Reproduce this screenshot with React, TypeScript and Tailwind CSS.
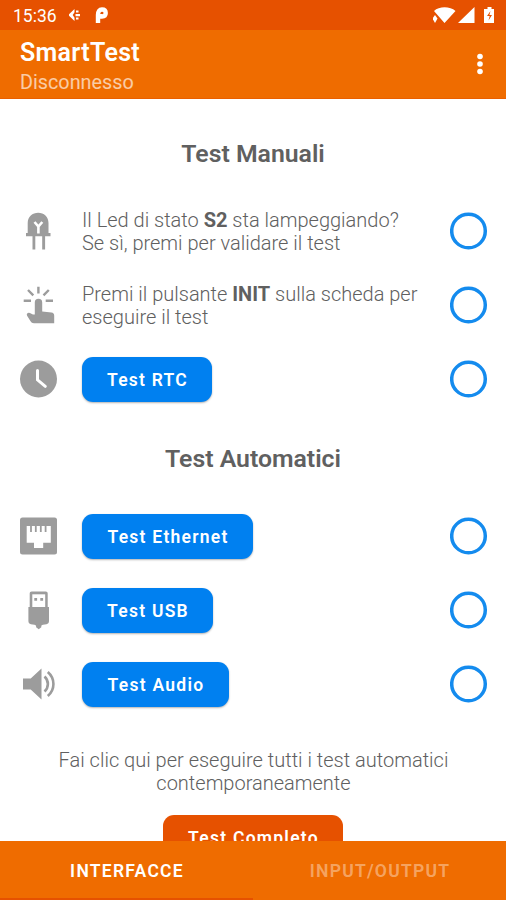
import type { ReactNode } from "react";

const icons = {
  led: (
    <>
      <path fill="currentColor" d="M11.2 24V14C11.2 7.5 16 3.7 21.7 3.7S32 7.5 32 14V24H34V27.2H28.6V40.5H25.7V27.2H18.8V40.5H16V27.2H9.5V24Z" />
      <path fill="none" stroke="white" strokeWidth="2.6" d="M18 13L21.9 17.5L25.8 13M21.9 16.5V24.5" />
    </>
  ),
  touch: (
    <>
      <path
        fill="currentColor"
        d="M18.3 19.5a3.7 3.7 0 0 1 7.4 0V28.6l9.3 1c1.7.2 2.7 1.2 2.7 2.9V40.3H17.5c-1.7 0-2.6-.7-3.6-2.2L10.6 32.700c-.8-1.4.1-2.9 1.8-2.9.8 0 1.4.2 2 .6l2 1.2h1.9Z"
      />
      <path fill="none" stroke="currentColor" strokeWidth="2.4" d="M7.2 17.700h7.3M29.2 17.700h7.3M21.9 3.700v6.700M11.5 7l5.3 5.3M32.3 7L27 12.3" />
    </>
  ),
  clock: (
    <>
      <circle cx="22" cy="22" r="18.5" fill="currentColor" />
      <path fill="none" stroke="white" strokeWidth="3" strokeLinecap="round" d="M21 13.5v9.3l7.8 6.6" />
    </>
  ),
  ethernet: (
    <>
      <rect x="3.5" y="3.5" width="37" height="37" rx="2.5" fill="currentColor" />
      <path fill="white" d="M10.2 12h3.4v6h1.8v-6h3v6h1.8v-6h3.2v6h1.8v-6h3v6h1.8v-6h4.3v16.7h-7.6V34h-9.2v-5.3h-7.3Z" />
    </>
  ),
  usb: (
    <>
      <path fill="currentColor" d="M13.2 5.5c0-1.3.7-2 2-2h14c1.3 0 2 .7 2 2V19h1.3V33c0 2-1 2.8-2.5 3.2l-3.5.6c-1 .2-1.7.7-1.7 1.5v1l-2.6 2-2.6-2v-1c0-.8-.7-1.3-1.7-1.5l-3.5-.6c-1.5-.4-2.5-1.2-2.5-3.2V19h1.3Z" />
      <path fill="white" d="M15.8 6.3h12.9V19H15.8Z" />
      <path fill="currentColor" d="M17.8 10h2.8v2.8h-2.8ZM23.8 10h2.8v2.8h-2.8Z" />
    </>
  ),
  audio: (
    <>
      <path fill="currentColor" d="M6.5 16.5h7.7L25 6.5v31l-10.8-10H6.5Z" />
      <path fill="none" stroke="currentColor" strokeWidth="2.6" d="M28 14.5c4.5 4 4.5 11 0 15M31.3 10c7.5 6.5 7.5 17.5 0 24" />
    </>
  ),
};

type IconName = keyof typeof icons;

function Row({ icon, children }: { icon: IconName; children: ReactNode }) {
  return (
    <div className="flex h-[74px] items-center pl-4 pr-[18px]">
      <svg viewBox="-0.5 0 44 44" className="size-11 shrink-0 text-[#9c9c9c]">
        {icons[icon]}
      </svg>
      <div className="ml-[22px] flex-1">{children}</div>
      <svg viewBox="0 0 38 38" className="size-[38px] shrink-0" fill="none">
        <circle cx="18.5" cy="19" r="16.8" stroke="#148bee" strokeWidth="3.5" />
      </svg>
    </div>
  );
}

function Button({ width, children }: { width: string; children: ReactNode }) {
  return (
    <button
      className={`${width} block h-[45px] rounded-[11px] bg-[#0080f0] pt-0.5 pl-px text-[17.5px] font-semibold tracking-[1.25px] text-white shadow-[0_1px_2px_rgba(0,0,0,0.3)]`}
    >
      {children}
    </button>
  );
}

export default function App() {
  return (
    <div className="flex h-[900px] w-[506px] flex-col overflow-hidden bg-white font-['Roboto',sans-serif] text-[#606060]">
      {/* Status bar */}
      <div className="flex h-[30px] shrink-0 items-center bg-[#e65100] pl-[13px] pr-[11px] text-white">
        <span className="w-[56px] pt-1 text-[17.5px] leading-none">15:36</span>
        <svg viewBox="0 0 12 12" className="size-3 shrink-0" fill="currentColor">
          <path d="M5.5 0v3.2L3.7 6l1.8 2.8V12L0 6.8V5.2ZM7 1.5h2.5v2H7ZM6.500 5h4.5v2.2H6.5ZM7 8.5h2.5v2H7Z" />
        </svg>
        <svg viewBox="0 0 13 16" className="ml-[14px] h-4 w-[13px]" fill="none">
          <path d="M3 16V7.5M3 8C3 4 4.500 2.500 7 2.500s3.700 1.500 3.700 3.500-1.200 3.500-3.700 3.500-2-1-2-2.500" stroke="currentColor" strokeWidth="4.4" />
        </svg>
        <svg viewBox="0 0 62 18" className="ml-auto h-[18px] w-[62px]" fill="currentColor">
          <path d="M1 5C6 0 17 0 22.5 5L11.5 17ZM41.5 1v16H25ZM52 3h2.5V1h4v2H61v14H51V3Z" />
          <path d="M2 9l2.5 3.5L2 17l-2.500-4.500Z" />
          <path d="M57.5 5L54 10h2.7l-1.2 4.5L59 9h-2.6Z" fill="#e65100" />
        </svg>
      </div>

      {/* App bar */}
      <header className="flex h-[69px] shrink-0 items-center justify-between border-b border-[#e65100]/50 bg-[#ef6c00] pl-5 pr-[22px] text-white">
        <div className="pt-[7px]">
          <h1 className="text-[25px] font-semibold leading-[30px] tracking-[0.3px]">SmartTest</h1>
          <p className="text-[19.8px] leading-[29px] text-white/65">Disconnesso</p>
        </div>
        <svg viewBox="0 0 8 22" className="h-[22px] w-2" fill="currentColor">
          <circle cx="4" cy="3.5" r="2.8" />
          <circle cx="4" cy="11" r="2.8" />
          <circle cx="4" cy="18.5" r="2.8" />
        </svg>
      </header>

      <main className="min-h-0 flex-1 overflow-hidden">
        <h2 className="mt-[40px] mb-[25px] text-center text-[24.8px] font-semibold leading-[30px]">Test Manuali</h2>
        <Row icon="led">
          <p className="whitespace-nowrap pt-0.5 text-[20px] font-light leading-[23px]">
            Il Led di stato <b className="font-bold">S2</b> sta lampeggiando?
            <br />
            Se sì, premi per validare il test
          </p>
        </Row>
        <Row icon="touch">
          <p className="whitespace-nowrap pt-0.5 text-[20px] font-light leading-[23px]">
            Premi il pulsante <b className="font-bold">INIT</b> sulla scheda per
            <br />
            eseguire il test
          </p>
        </Row>
        <Row icon="clock">
          <Button width="w-[130px]">Test RTC</Button>
        </Row>

        <h2 className="mt-[28px] mb-[25px] text-center text-[24.8px] font-semibold leading-[30px]">Test Automatici</h2>
        <Row icon="ethernet">
          <Button width="w-[171px]">Test Ethernet</Button>
        </Row>
        <Row icon="usb">
          <Button width="w-[131px]">Test USB</Button>
        </Row>
        <Row icon="audio">
          <Button width="w-[147px]">Test Audio</Button>
        </Row>

        <p className="mt-[28px] pl-px text-center text-[20px] font-light leading-[23px]">
          Fai clic qui per eseguire tutti i test automatici
          <br />
          contemporaneamente
        </p>
        <button className="mx-auto mt-[20px] block h-[45px] w-[180px] rounded-[11px] bg-[#e65100] pt-0.5 pl-px text-[17.5px] font-semibold tracking-[1.25px] text-white">
          Test Completo
        </button>
      </main>

      {/* Tabs */}
      <nav className="grid h-[59px] shrink-0 grid-cols-2 bg-[#ef6c00] text-[17.5px] font-semibold tracking-[1.25px]">
        <button className="border-b-2 border-[#e65100] pt-1 pl-px text-white">INTERFACCE</button>
        <button className="border-b-2 border-transparent pt-1 pl-px text-white/40">INPUT/OUTPUT</button>
      </nav>
    </div>
  );
}
